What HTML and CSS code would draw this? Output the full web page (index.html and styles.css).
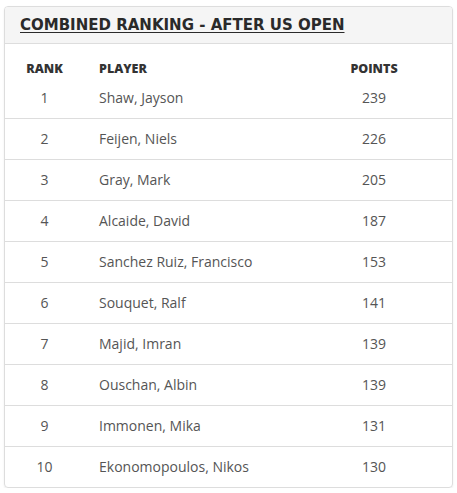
FILE: index.html
```html
<!DOCTYPE html>
<html>
<head>
<meta charset="utf-8">
<link rel="stylesheet" href="styles.css">
</head>
<body>
<div class="wrap">
  <div class="panel">
    <div class="panel-heading"><h3 class="panel-title">Combined Ranking - After US Open</h3></div>
    <div class="panel-body">
      <table class="ranking">
        <colgroup><col class="c-rank"><col class="c-player"><col class="c-points"></colgroup>
        <thead>
          <tr><th class="rank">RANK</th><th class="player">PLAYER</th><th class="points">POINTS</th></tr>
        </thead>
        <tbody>
          <tr class="first"><td class="rank">1</td><td class="player">Shaw, Jayson</td><td class="points">239</td></tr>
          <tr><td class="rank">2</td><td class="player">Feijen, Niels</td><td class="points">226</td></tr>
          <tr><td class="rank">3</td><td class="player">Gray, Mark</td><td class="points">205</td></tr>
          <tr><td class="rank">4</td><td class="player">Alcaide, David</td><td class="points">187</td></tr>
          <tr><td class="rank">5</td><td class="player">Sanchez Ruiz, Francisco</td><td class="points">153</td></tr>
          <tr><td class="rank">6</td><td class="player">Souquet, Ralf</td><td class="points">141</td></tr>
          <tr><td class="rank">7</td><td class="player">Majid, Imran</td><td class="points">139</td></tr>
          <tr><td class="rank">8</td><td class="player">Ouschan, Albin</td><td class="points">139</td></tr>
          <tr><td class="rank">9</td><td class="player">Immonen, Mika</td><td class="points">131</td></tr>
          <tr><td class="rank">10</td><td class="player">Ekonomopoulos, Nikos</td><td class="points">130</td></tr>
        </tbody>
      </table>
    </div>
  </div>
</div>
</body>
</html>
```
FILE: styles.css
```css
html, body { margin: 0; padding: 0; background: #fff; }
body { font-family: "Open Sans", "Liberation Sans", sans-serif; font-size: 14px; color: #555; }
.wrap { padding: 6px 4px 0 4px; }
.panel {
  width: 447px;
  border: 1px solid #ddd;
  border-radius: 4px;
  box-shadow: 0 1px 2px rgba(0,0,0,0.08);
  overflow: hidden;
}
.panel-heading {
  background: #f5f5f5;
  border-bottom: 1px solid #ddd;
  height: 37px;
  box-sizing: border-box;
  padding: 10px 15px 0 15px;
}
.panel-title {
  margin: 0;
  font-family: "DejaVu Sans", sans-serif;
  font-weight: 700;
  font-size: 15px;
  line-height: 17px;
  text-transform: uppercase;
  text-decoration: underline;
  text-underline-offset: 2px;
  color: #2a2a2a;
  letter-spacing: 0;
}
.panel-body { padding: 16px 0 0 0; }
.ranking { width: 100%; border-collapse: collapse; table-layout: fixed; }
.c-rank { width: 79px; }
.c-player { width: 220px; }
.ranking th {
  font-size: 12.5px;
  font-weight: 800;
  color: #333;
  line-height: 18px;
  padding: 0;
}
.ranking td { line-height: 20px; padding: 10px 0; border-top: 1px solid #ddd; }
.ranking tr.first td { border-top: 0; }
.rank { text-align: center; }
.player { text-align: left; padding-left: 15px !important; }
.points { text-align: center; padding-right: 8px !important; }
```
